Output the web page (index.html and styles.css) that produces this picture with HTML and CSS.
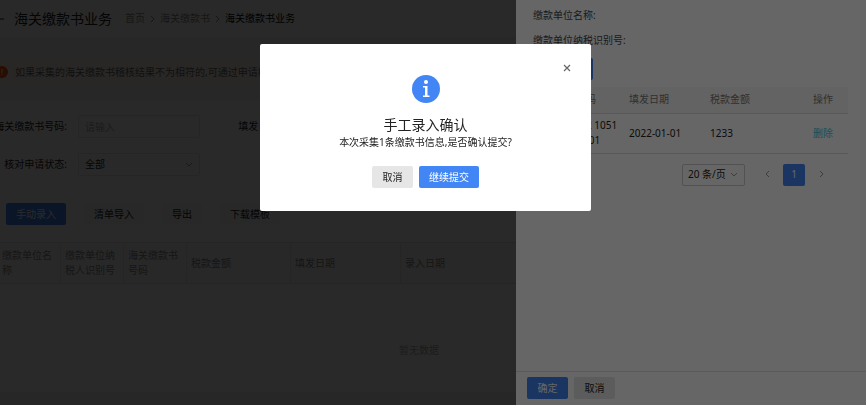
FILE: index.html
```html
<!DOCTYPE html>
<html lang="zh-CN">
<head>
    <meta charset="UTF-8">
    <meta name="viewport" content="width=device-width, initial-scale=1.0">
    <title>海关缴款书业务</title>
    <link rel="stylesheet" href="styles.css">
</head>
<body>
    <div class="page">
        <header class="page-header">
            <a href="#" class="back" aria-label="返回">
                <svg width="12" height="10" viewBox="0 0 12 10" fill="none" stroke="currentColor"><path d="M12 5H1M5 1L1 5l4 4"/></svg>
            </a>
            <h1>海关缴款书业务</h1>
            <nav class="breadcrumb">
                <a href="#">首页</a>
                <svg width="5" height="8" viewBox="0 0 5 8" fill="none" stroke="currentColor"><path d="M1 1l3 3-3 3"/></svg>
                <a href="#">海关缴款书</a>
                <svg width="5" height="8" viewBox="0 0 5 8" fill="none" stroke="currentColor"><path d="M1 1l3 3-3 3"/></svg>
                <span class="current">海关缴款书业务</span>
            </nav>
        </header>

        <div class="notice">
            <svg width="12" height="12" viewBox="0 0 12 12"><circle cx="6" cy="6" r="6" fill="#fa5000"/><path d="M6 3v4M6 8v1" stroke="#fff"/></svg>
            <span>如果采集的海关缴款书稽核结果不为相符的,可通过申请核对</span>
        </div>

        <main class="panel">
            <form class="filters">
                <label for="number">海关缴款书号码:</label>
                <input type="text" id="number" class="field" placeholder="请输入">
                <label for="issueDate">填发日期:</label>
                <input type="text" id="issueDate" class="field">
                <label for="status">核对申请状态:</label>
                <div class="select-wrap">
                    <select id="status" class="field">
                        <option>全部</option>
                    </select>
                    <svg class="chevron" width="8" height="6" viewBox="0 0 8 6" fill="none" stroke="currentColor"><path d="M1 1l3 3 3-3"/></svg>
                </div>
            </form>

            <div class="toolbar">
                <button type="button" class="btn btn-primary">手动录入</button>
                <button type="button" class="btn">清单导入</button>
                <button type="button" class="btn">导出</button>
                <button type="button" class="btn">下载模板</button>
            </div>

            <table class="list">
                <colgroup>
                    <col class="col-name"><col class="col-name"><col class="col-number"><col class="col-amount"><col class="col-date"><col>
                </colgroup>
                <thead>
                    <tr>
                        <th>缴款单位名称</th>
                        <th>缴款单位纳税人识别号</th>
                        <th>海关缴款书号码</th>
                        <th>税款金额</th>
                        <th>填发日期</th>
                        <th>录入日期</th>
                    </tr>
                </thead>
                <tbody>
                    <tr><td colspan="6" class="empty">暂无数据</td></tr>
                </tbody>
            </table>
        </main>
    </div>

    <div class="mask"></div>

    <aside class="drawer">
        <div class="drawer-body">
            <p>缴款单位名称:</p>
            <p>缴款单位纳税识别号:</p>
            <button type="button" class="btn btn-primary add">继续添加</button>
            <table class="detail">
                <colgroup>
                    <col class="col-code"><col class="col-day"><col class="col-sum"><col class="col-action">
                </colgroup>
                <thead>
                    <tr>
                        <th>缴款书号码</th>
                        <th>填发日期</th>
                        <th>税款金额</th>
                        <th>操作</th>
                    </tr>
                </thead>
                <tbody>
                    <tr>
                        <td>22012022 1051<br>100026-L01</td>
                        <td>2022-01-01</td>
                        <td>1233</td>
                        <td><a href="#">删除</a></td>
                    </tr>
                </tbody>
            </table>
            <div class="pager">
                <div class="select-wrap">
                    <select class="field page-size" aria-label="每页条数">
                        <option>20 条/页</option>
                    </select>
                    <svg class="chevron" width="8" height="6" viewBox="0 0 8 6" fill="none" stroke="currentColor"><path d="M1 1l3 3 3-3"/></svg>
                </div>
                <button type="button" class="pager-btn" aria-label="上一页">
                    <svg width="5" height="8" viewBox="0 0 5 8" fill="none" stroke="currentColor"><path d="M4 1L1 4l3 3"/></svg>
                </button>
                <button type="button" class="pager-btn active">1</button>
                <button type="button" class="pager-btn" aria-label="下一页">
                    <svg width="5" height="8" viewBox="0 0 5 8" fill="none" stroke="currentColor"><path d="M1 1l3 3-3 3"/></svg>
                </button>
            </div>
        </div>
        <footer class="drawer-footer">
            <button type="button" class="btn btn-primary">确定</button>
            <button type="button" class="btn">取消</button>
        </footer>
    </aside>

    <div class="mask dialog-mask">
        <div class="dialog" role="dialog" aria-labelledby="dialogTitle">
            <button type="button" class="close" aria-label="关闭">
                <svg width="8" height="8" viewBox="0 0 8 8" fill="none" stroke="currentColor" stroke-width="1.2"><path d="M1 1l6 6M7 1L1 7"/></svg>
            </button>
            <svg class="info" width="28" height="28" viewBox="0 0 28 28">
                <circle cx="14" cy="14" r="14" fill="#4285f4"/>
                <circle cx="14" cy="7" r="2" fill="#fff"/>
                <path d="M11 11h4.500v9.500H17.500v1.500h-6.500v-1.500h2v-8h-2z" fill="#fff"/>
            </svg>
            <h2 id="dialogTitle">手工录入确认</h2>
            <p>本次采集1条缴款书信息,是否确认提交?</p>
            <div class="dialog-actions">
                <button type="button" class="btn">取消</button>
                <button type="button" class="btn btn-primary">继续提交</button>
            </div>
        </div>
    </div>
</body>
</html>
```
FILE: styles.css
```css
* {
    box-sizing: border-box;
}
body {
    margin: 0;
    height: 100vh;
    overflow: hidden;
    background: #f0f0f0;
    color: #222;
    font-family: "Noto Sans", "Noto Sans CJK SC", sans-serif;
    font-size: 10px;
    line-height: 15px;
}
button, input, select {
    font: inherit;
    color: inherit;
}
h1, h2, p {
    margin: 0;
    font-weight: normal;
}
a {
    color: inherit;
    text-decoration: none;
}
svg {
    flex: none;
}

/* page */
.page {
    display: flex;
    flex-direction: column;
    height: 100vh;
    margin-left: -15px;
    padding-bottom: 13px;
}
.page-header {
    display: flex;
    flex: none;
    align-items: center;
    height: 37px;
    padding-left: 7px;
    background: #fff;
}
.back {
    display: flex;
    margin-right: 10px;
}
.page-header h1 {
    font-size: 14px;
    line-height: 20px;
}
.breadcrumb {
    display: flex;
    align-items: center;
    gap: 5px;
    margin-left: 13px;
    color: #888;
}
.breadcrumb .current {
    color: #000;
}
.notice {
    display: flex;
    flex: none;
    align-items: center;
    gap: 7px;
    height: 30px;
    margin: 20px 0 13px;
    padding-left: 11px;
    background: #fff0e4;
    color: #666;
}
.panel {
    flex: 1;
    padding: 15px 25px 0 12px;
    background: #fff;
}
.filters {
    display: grid;
    grid-template-columns: 70px 122px 70px 122px;
    column-gap: 11px;
    row-gap: 15px;
}
.filters label {
    justify-self: end;
    white-space: nowrap;
    line-height: 23px;
}
.field {
    width: 100%;
    height: 23px;
    padding: 0 6px;
    border: 1px solid #e4e4e4;
    border-radius: 2px;
    background: #fff;
    appearance: none;
}
.field::placeholder {
    color: #aaa;
}
.select-wrap {
    position: relative;
}
.chevron {
    position: absolute;
    top: 9px;
    right: 7px;
    color: #999;
    pointer-events: none;
}
.toolbar {
    display: flex;
    gap: 18px;
    margin: 27px 0 17px;
    padding-left: 9px;
}
.btn {
    height: 22px;
    padding: 0 10px;
    border: 0;
    border-radius: 2px;
    background: #e6e6e6;
}
.toolbar .btn {
    background: #f5f5f5;
}
.btn-primary, .toolbar .btn-primary {
    background: #4285f4;
    color: #fff;
}
table {
    width: 100%;
    border-collapse: collapse;
    table-layout: fixed;
}
th, td {
    padding: 0 4px;
    text-align: left;
    font-weight: normal;
}
.list th {
    height: 41px;
    border: 1px solid #e4e4e4;
    background: #f8f8f8;
    color: #888;
}
.col-name, .col-number {
    width: 63px;
}
.col-amount {
    width: 104px;
}
.col-date {
    width: 110px;
}
.list .empty {
    height: 108px;
    padding-top: 26px;
    text-align: center;
    color: #aaa;
}

/* overlays */
.mask {
    position: fixed;
    inset: 0;
    background: rgba(0, 0, 0, .6);
}
.drawer {
    position: fixed;
    top: 0;
    right: 0;
    bottom: 0;
    display: flex;
    flex-direction: column;
    width: 350px;
    background: #fff;
}
.drawer-body {
    flex: 1;
    padding: 8px 18px 0 17px;
}
.drawer-body p {
    margin-bottom: 10px;
    color: #444;
}
.drawer-body .add {
    display: block;
    margin: 1px 0 7px;
}
.detail th, .detail td {
    border-bottom: 1px solid #ddd;
}
.detail th {
    height: 26px;
    background: #f8f8f8;
    color: #777;
}
.detail td {
    height: 40px;
}
.detail th:first-child, .detail td:first-child {
    padding-left: 13px;
}
.detail a {
    color: #4fc3dc;
}
.col-code {
    width: 92px;
}
.col-day {
    width: 81px;
}
.col-sum {
    width: 103px;
}
.pager {
    display: flex;
    justify-content: flex-end;
    gap: 5px;
    margin-top: 10px;
    padding-right: 16px;
}
.pager .select-wrap {
    margin-right: 6px;
}
.pager .page-size {
    width: 63px;
    height: 22px;
    padding: 0 5px;
    border-color: #ccc;
}
.pager .chevron {
    top: 8px;
}
.pager-btn {
    width: 22px;
    height: 22px;
    padding: 0;
    border: 0;
    border-radius: 2px;
    background: none;
    color: #999;
}
.pager-btn.active {
    background: #4285f4;
    color: #fff;
}
.drawer-footer {
    display: flex;
    gap: 6px;
    padding: 5px 11px 6px;
    border-top: 1px solid #e0e0e0;
}
.drawer-footer .btn, .dialog-actions .btn {
    min-width: 41px;
}

/* confirm dialog */
.dialog-mask {
    display: flex;
    justify-content: center;
    align-items: flex-start;
    padding: 44px 15px 0 0;
}
.dialog {
    position: relative;
    display: flex;
    flex-direction: column;
    align-items: center;
    width: 331px;
    padding: 31px 20px 23px;
    border-radius: 2px;
    background: #fff;
}
.close {
    position: absolute;
    top: 16px;
    right: 16px;
    display: flex;
    padding: 4px;
    border: 0;
    background: none;
    color: #666;
}
.dialog h2 {
    margin-top: 12px;
    font-size: 14px;
    line-height: 20px;
}
.dialog-actions {
    display: flex;
    gap: 6px;
    margin-top: 16px;
}
```
